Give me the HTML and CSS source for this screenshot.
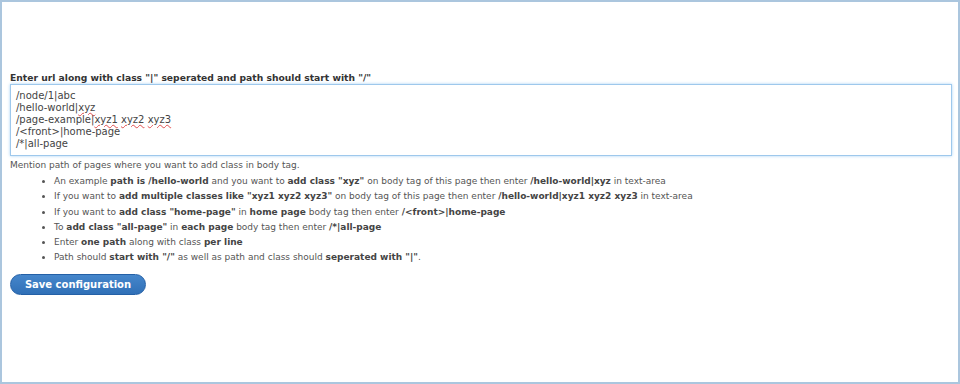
FILE: index.html
```html
<!DOCTYPE html>
<html lang="en">
<head>
    <meta charset="UTF-8">
    <title>Body class settings</title>
    <link rel="stylesheet" href="styles.css">
</head>
<body>
    <div class="frame">
        <form class="config-form">
            <label class="field-label" for="class-paths">Enter url along with class "|" seperated and path should start with "/"</label>
            <div class="textarea">
                <div>/node/1|abc</div>
                <div>/hello-world|<span class="spell">xyz</span></div>
                <div>/page-example|<span class="spell">xyz1</span> <span class="spell">xyz2</span> <span class="spell">xyz3</span></div>
                <div>/&lt;front&gt;|home-page</div>
                <div>/*|all-page</div>
            </div>
            <div class="description">
                <p>Mention path of pages where you want to add class in body tag.</p>
                <ul>
                    <li>An example <b>path is /hello-world</b> and you want to <b>add class "xyz"</b> on body tag of this page then enter <b>/hello-world|xyz</b> in text-area</li>
                    <li>If you want to <b>add multiple classes like "xyz1 xyz2 xyz3"</b> on body tag of this page then enter <b>/hello-world|xyz1 xyz2 xyz3</b> in text-area</li>
                    <li>If you want to <b>add class "home-page"</b> in <b>home page</b> body tag then enter <b>/&lt;front&gt;|home-page</b></li>
                    <li>To <b>add class "all-page"</b> in <b>each page</b> body tag then enter <b>/*|all-page</b></li>
                    <li>Enter <b>one path</b> along with class <b>per line</b></li>
                    <li>Path should <b>start with "/"</b> as well as path and class should <b>seperated with "|"</b>.</li>
                </ul>
            </div>
            <button type="button" class="save-button">Save configuration</button>
        </form>
    </div>
</body>
</html>
```

FILE: styles.css
```css
body {
    margin: 0;
    padding: 0;
    background-color: #fff;
    font-family: "DejaVu Sans", Verdana, sans-serif;
    color: #333;
}
.frame {
    box-sizing: border-box;
    width: 960px;
    height: 384px;
    border: 2px solid #abc6de;
    padding: 70px 6px 0 8px;
}
.field-label {
    display: block;
    font-size: 9.2px;
    line-height: 11px;
    font-weight: bold;
    color: #333;
    margin-bottom: 1px;
}
.textarea {
    box-sizing: border-box;
    height: 72px;
    border: 1px solid #9ec8ec;
    box-shadow: 0 0 3px #a9d3f5;
    padding: 5px 5px 4px;
    font-size: 10px;
    line-height: 12px;
    color: #444;
}
.spell {
    text-decoration: underline wavy #e05050;
    text-decoration-thickness: 1px;
}
.description {
    font-size: 9px;
    color: #555;
}
.description p {
    margin: 3px 0 0 0;
    line-height: 12px;
}
.description ul {
    margin: 3px 0 0 0;
    padding-left: 44px;
}
.description li {
    line-height: 15.3px;
}
.description b {
    color: #444;
}
.save-button {
    margin-top: 8px;
    width: 136px;
    height: 21px;
    border: 1px solid #2460a6;
    border-radius: 11px;
    background: linear-gradient(#4586cb, #3070b7);
    color: #fff;
    font-family: "DejaVu Sans", Verdana, sans-serif;
    font-size: 10px;
    font-weight: bold;
    cursor: pointer;
}
```
